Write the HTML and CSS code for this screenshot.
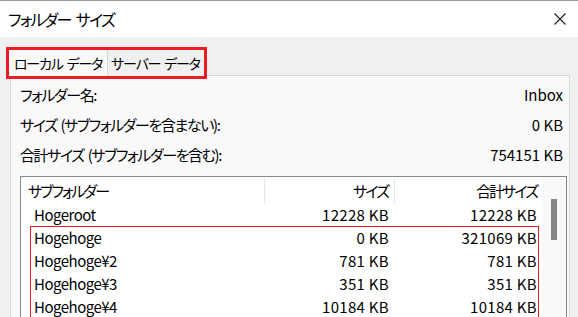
FILE: index.html
```html
<!DOCTYPE html>
<html lang="ja">
<head>
    <meta charset="UTF-8">
    <title>フォルダー サイズ</title>
    <link rel="stylesheet" href="styles.css">
</head>
<body>
<div class="window">
    <div class="titlebar">
        <span class="title">フォルダー サイズ</span>
        <svg class="close" width="12" height="12" viewBox="0 0 12 12">
            <path d="M0.5 0.5 L11.5 11.5 M11.5 0.5 L0.5 11.5" stroke="#1a1a1a" stroke-width="1.1" fill="none"/>
        </svg>
    </div>
    <div class="content">
        <div class="tabs">
            <div class="tab active">ローカル データ</div>
            <div class="tab">サーバー データ</div>
        </div>
        <div class="panel">
            <div class="info-row"><span class="label">フォルダー名:</span><span>Inbox</span></div>
            <div class="info-row"><span class="label">サイズ (サブフォルダーを含まない):</span><span>0 KB</span></div>
            <div class="info-row"><span class="label">合計サイズ (サブフォルダーを含む):</span><span>754151 KB</span></div>
            <div class="list">
                <div class="list-main">
                    <div class="list-head">
                        <div class="col name">サブフォルダー</div>
                        <div class="col size">サイズ</div>
                        <div class="col total">合計サイズ</div>
                    </div>
                    <div class="list-row">
                        <div class="col name">Hogeroot</div>
                        <div class="col size">12228 KB</div>
                        <div class="col total">12228 KB</div>
                    </div>
                    <div class="marked">
                        <div class="list-row">
                            <div class="col name">Hogehoge</div>
                            <div class="col size">0 KB</div>
                            <div class="col total">321069 KB</div>
                        </div>
                        <div class="list-row">
                            <div class="col name">Hogehoge¥2</div>
                            <div class="col size">781 KB</div>
                            <div class="col total">781 KB</div>
                        </div>
                        <div class="list-row">
                            <div class="col name">Hogehoge¥3</div>
                            <div class="col size">351 KB</div>
                            <div class="col total">351 KB</div>
                        </div>
                        <div class="list-row">
                            <div class="col name">Hogehoge¥4</div>
                            <div class="col size">10184 KB</div>
                            <div class="col total">10184 KB</div>
                        </div>
                    </div>
                </div>
                <div class="scrollbar"><div class="thumb"></div></div>
            </div>
        </div>
    </div>
</div>
</body>
</html>
```

FILE: styles.css
```css
html, body{
    margin:0px;
    padding:0px;
    width:100%;
    height:100%;
    overflow:hidden;
}
body{
    font-family:"Noto Sans CJK JP", "Noto Sans", sans-serif;
    font-feature-settings:"palt";
    color:#000;
    background:#f0f0f0;
}
.window{
    display:flex;
    flex-direction:column;
    height:100%;
}
.titlebar{
    height:37px;
    flex:none;
    background:#fff;
    border-top:1px solid #9a9a9a;
    box-sizing:border-box;
    display:flex;
    align-items:center;
    justify-content:space-between;
    padding:0px 12px 0px 8px;
}
.title{
    font-size:16px;
    letter-spacing:-1.7px;
    word-spacing:3px;
}
.close{
    margin-top:-1px;
}
.content{
    flex:1;
    background:#f0f0f0;
    padding:10px 8px 0px 6px;
}
.tabs{
    display:flex;
    width:fit-content;
    border:3px solid #ec1c24;
    height:26px;
    position:relative;
    z-index:1;
}
.tab{
    font-size:14px;
    letter-spacing:-1.2px;
    word-spacing:2px;
    line-height:26px;
    padding:0px 4px 0px 3px;
    background:#f0f0f0;
}
.tab.active{
    background:#f9f9f9;
    padding:0px 5px 0px 5px;
    border-right:1px solid #d9d9d9;
}
.panel{
    margin:-4px 0px 0px 4px;
    background:#f9f9f9;
    border:1px solid #d9d9d9;
    height:300px;
    padding:4px 6px 0px 9px;
}
.info-row{
    display:flex;
    justify-content:space-between;
    font-size:15px;
    height:30px;
    line-height:30px;
}
.label{
    letter-spacing:-1.4px;
    word-spacing:2px;
}
.list{
    margin:6px -4px 0px 0px;
    border:1px solid #828790;
    background:#fff;
    display:flex;
    height:200px;
}
.list-main{
    width:521px;
}
.list-head, .list-row{
    display:flex;
    font-size:15px;
}
.list-head{
    height:25px;
    line-height:25px;
    margin-top:1px;
    letter-spacing:-2px;
}
.list-row{
    height:23px;
    line-height:23px;
}
.col.name{
    width:244px;
    padding-left:13px;
    box-sizing:border-box;
}
.list-row .col.name{
    letter-spacing:-0.5px;
}
.list-row .col.size, .list-row .col.total{
    letter-spacing:0.3px;
}
.col.size{
    width:130px;
    text-align:right;
    padding-right:6px;
    box-sizing:border-box;
}
.col.total{
    width:147px;
    text-align:right;
    padding-right:5px;
    box-sizing:border-box;
}
.list-head .col.name{
    padding-left:7px;
    border-right:1px solid #e5e5e5;
}
.list-head .col.size{
    border-right:1px solid #e5e5e5;
}
.marked{
    position:relative;
}
.marked::after{
    content:"";
    position:absolute;
    left:9px;
    right:3px;
    top:0px;
    bottom:-10px;
    border:1px solid #ec1c24;
}
.scrollbar{
    width:25px;
    background:#f9f9f9;
    display:flex;
    justify-content:center;
    padding-top:22px;
}
.thumb{
    width:6px;
    height:41px;
    background:#858585;
    margin-left:-1px;
}
```
